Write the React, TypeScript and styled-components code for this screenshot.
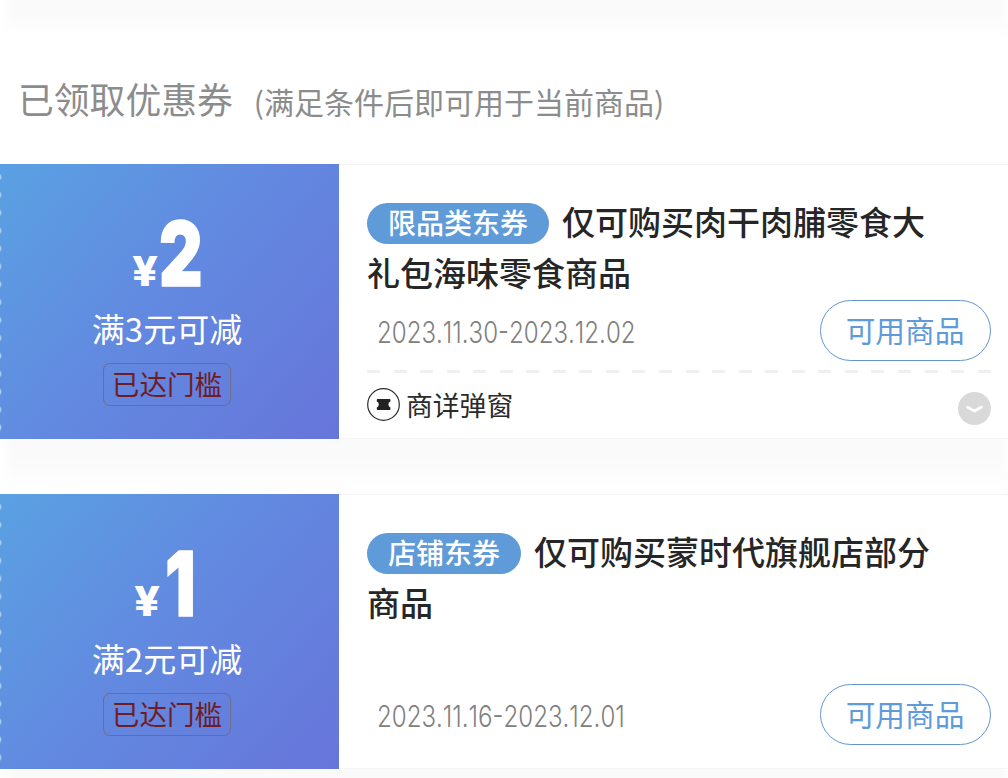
import React from 'react';
import styled, { createGlobalStyle } from 'styled-components';

interface Coupon {
  amount: string;
  condition: string;
  tag: string;
  title: string;
  date: string;
  source?: string;
}

const coupons: Coupon[] = [
  {
    amount: '2',
    condition: '满3元可减',
    tag: '限品类东券',
    title: '仅可购买肉干肉脯零食大礼包海味零食商品',
    date: '2023.11.30-2023.12.02',
    source: '商详弹窗',
  },
  {
    amount: '1',
    condition: '满2元可减',
    tag: '店铺东券',
    title: '仅可购买蒙时代旗舰店部分商品',
    date: '2023.11.16-2023.12.01',
  },
];

const CouponCard: React.FC<{ coupon: Coupon }> = ({ coupon }) => (
  <StyleCard>
    <StyleFace>
      <StylePrice>
        <StyleYen>¥</StyleYen>
        <StyleAmount narrow={coupon.amount === '1'}>{coupon.amount}</StyleAmount>
      </StylePrice>
      <StyleCondition>{coupon.condition}</StyleCondition>
      <StyleReached>已达门槛</StyleReached>
    </StyleFace>
    <StyleInfo>
      <StyleTitle>
        <StyleTag>{coupon.tag}</StyleTag>
        {coupon.title}
      </StyleTitle>
      <StyleDateRow last={!coupon.source}>
        <StyleDate>{coupon.date}</StyleDate>
        <StyleButton>可用商品</StyleButton>
      </StyleDateRow>
      {coupon.source && (
        <>
          <StyleDash />
          <StyleSource>
            <TicketIcon />
            <span>{coupon.source}</span>
            <StyleExpand>
              <ExpandIcon />
            </StyleExpand>
          </StyleSource>
        </>
      )}
    </StyleInfo>
  </StyleCard>
);

const TicketIcon = () => (
  <svg width="33" height="33" viewBox="0 0 33 33" fill="none">
    <circle cx="16.5" cy="16.5" r="15.8" stroke="#2b2b2b" strokeWidth="1.2" />
    <path
      d="M10.6 11H22.6Q23.4 11 23.4 11.8V13.6Q21.4 14.2 21.4 16.5Q21.4 18.8 23.4 19.4V21.2Q23.4 22 22.6 22H10.6Q9.8 22 9.8 21.2V19.4Q11.8 18.8 11.8 16.5Q11.8 14.2 9.8 13.6V11.8Q9.8 11 10.6 11Z"
      fill="#222"
    />
  </svg>
);

const ExpandIcon = () => (
  <svg width="33" height="33" viewBox="0 0 33 33" fill="none">
    <circle cx="16.5" cy="16.5" r="16.5" fill="#d9d9d9" />
    <path d="M9.6 15.3L16.5 18.9L23.4 15.3" stroke="#fff" strokeWidth="2.8" strokeLinecap="round" strokeLinejoin="round" />
  </svg>
);

const App: React.FC = () => (
  <>
    <GlobalStyle />
    <StylePage>
      <StyleStrip size={36} />
      <StyleHeader>
        <StyleHeading>已领取优惠券</StyleHeading>
        <StyleHint>(满足条件后即可用于当前商品)</StyleHint>
      </StyleHeader>
      {coupons.map((coupon) => (
        <React.Fragment key={coupon.date}>
          <CouponCard coupon={coupon} />
          <StyleStrip size={55} />
        </React.Fragment>
      ))}
    </StylePage>
  </>
);

const GlobalStyle = createGlobalStyle`
  * {
    box-sizing: border-box;
  }
  body {
    margin: 0;
    background: #fff;
    font-family: 'Noto Sans CJK SC', sans-serif;
  }
`;

const StylePage = styled.main`
  width: 1008px;
  height: 778px;
  overflow: hidden;
  display: flex;
  flex-direction: column;
`;

const StyleStrip = styled.div<{ size: number }>`
  flex: none;
  height: ${(props) => props.size}px;
  background:
    linear-gradient(90deg, #fff, rgba(255, 255, 255, 0) 14px, rgba(255, 255, 255, 0) 1000px, #fdfdfd),
    linear-gradient(#fafafa 35%, #fff);
`;

const StyleHeader = styled.header`
  flex: none;
  height: 128px;
  padding: 0 18px;
  display: flex;
  align-items: baseline;
  color: #8c8c8c;
  line-height: 125px;
`;

const StyleHeading = styled.h1`
  margin: 0;
  font-size: 35.8px;
  font-weight: 400;
`;

const StyleHint = styled.span`
  margin-left: 21px;
  font-size: 30px;
`;

const StyleCard = styled.section`
  flex: none;
  height: 275px;
  display: flex;
`;

const StyleFace = styled.div`
  flex: none;
  width: 339px;
  padding-right: 5px;
  display: flex;
  flex-direction: column;
  align-items: center;
  color: #fff;
  background:
    radial-gradient(circle at -3px 9px, #a9d0f0 3.6px, rgba(169, 208, 240, 0) 5px) 0 4px / 8px 17.9px repeat-y,
    linear-gradient(130deg, #5aa1e2, #6289e0 48%, #6775da);
`;

const StylePrice = styled.div`
  height: 140px;
  display: flex;
  align-items: baseline;
  font-family: Inter, sans-serif;
  line-height: 179px;
`;

const StyleYen = styled.span`
  width: 27px;
  font-size: 41px;
  font-weight: 800;
  transform: scaleX(1.1);
  transform-origin: left;
`;

const StyleAmount = styled.span<{ narrow: boolean }>`
  width: ${(props) => (props.narrow ? 36 : 44)}px;
  margin-left: ${(props) => (props.narrow ? 4 : 0)}px;
  font-size: 90px;
  font-weight: 900;
  -webkit-text-stroke: 1.4px #fff;
  transform: scaleX(0.75);
  transform-origin: left;
`;

const StyleCondition = styled.div`
  font-size: 33px;
  line-height: 48px;
`;

const StyleReached = styled.div`
  width: 128px;
  height: 43px;
  margin-top: 11px;
  border: 1px solid #6c6c8e;
  border-radius: 7px;
  color: #6f1d22;
  font-size: 27.6px;
  line-height: 39px;
  text-align: center;
  white-space: nowrap;
`;

const StyleInfo = styled.div`
  flex: 1;
  padding: 31px 17px 0 28px;
  border-top: 1px solid #f3f3f3;
  border-bottom: 1px solid #f5f5f5;
  display: flex;
  flex-direction: column;
`;

const StyleTitle = styled.h2`
  width: 570px;
  height: 104px;
  margin: 0;
  color: #262626;
  font-size: 33px;
  font-weight: 500;
  line-height: 51px;
`;

const StyleTag = styled.span`
  display: inline-block;
  height: 41px;
  margin-right: 13px;
  padding: 0 21px;
  border-radius: 21px;
  background: #5e9bd8;
  color: #fff;
  font-size: 28px;
  line-height: 39px;
  vertical-align: 1px;
`;

const StyleDateRow = styled.div<{ last: boolean }>`
  height: 61px;
  margin-top: ${(props) => (props.last ? 'auto' : '0')};
  margin-bottom: ${(props) => (props.last ? '23px' : '9px')};
  padding-left: 10px;
  display: flex;
  align-items: center;
  justify-content: space-between;
`;

const StyleDate = styled.span`
  color: #808080;
  font-family: Inter, sans-serif;
  font-size: 30px;
  font-weight: 300;
  font-kerning: none;
  transform: translateY(1px) scaleX(0.803);
  transform-origin: left;
`;

const StyleButton = styled.button`
  width: 171px;
  height: 61px;
  padding: 0 1px 2px 0;
  border: 1px solid #6496cc;
  border-radius: 31px;
  background: #fff;
  color: #5e9bd8;
  font-family: inherit;
  font-size: 29.7px;
  line-height: 56px;
`;

const StyleDash = styled.div`
  height: 3px;
  background: repeating-linear-gradient(90deg, #f0f0f0 0 13px, transparent 13px 26.55px);
`;

const StyleSource = styled.div`
  height: 63px;
  display: flex;
  align-items: center;
  color: #2b2b2b;
  font-size: 26.8px;
  span {
    flex: 1;
    margin-left: 6px;
  }
`;

const StyleExpand = styled.div`
  height: 33px;
  margin-top: 7px;
  line-height: 0;
`;

export default App;
